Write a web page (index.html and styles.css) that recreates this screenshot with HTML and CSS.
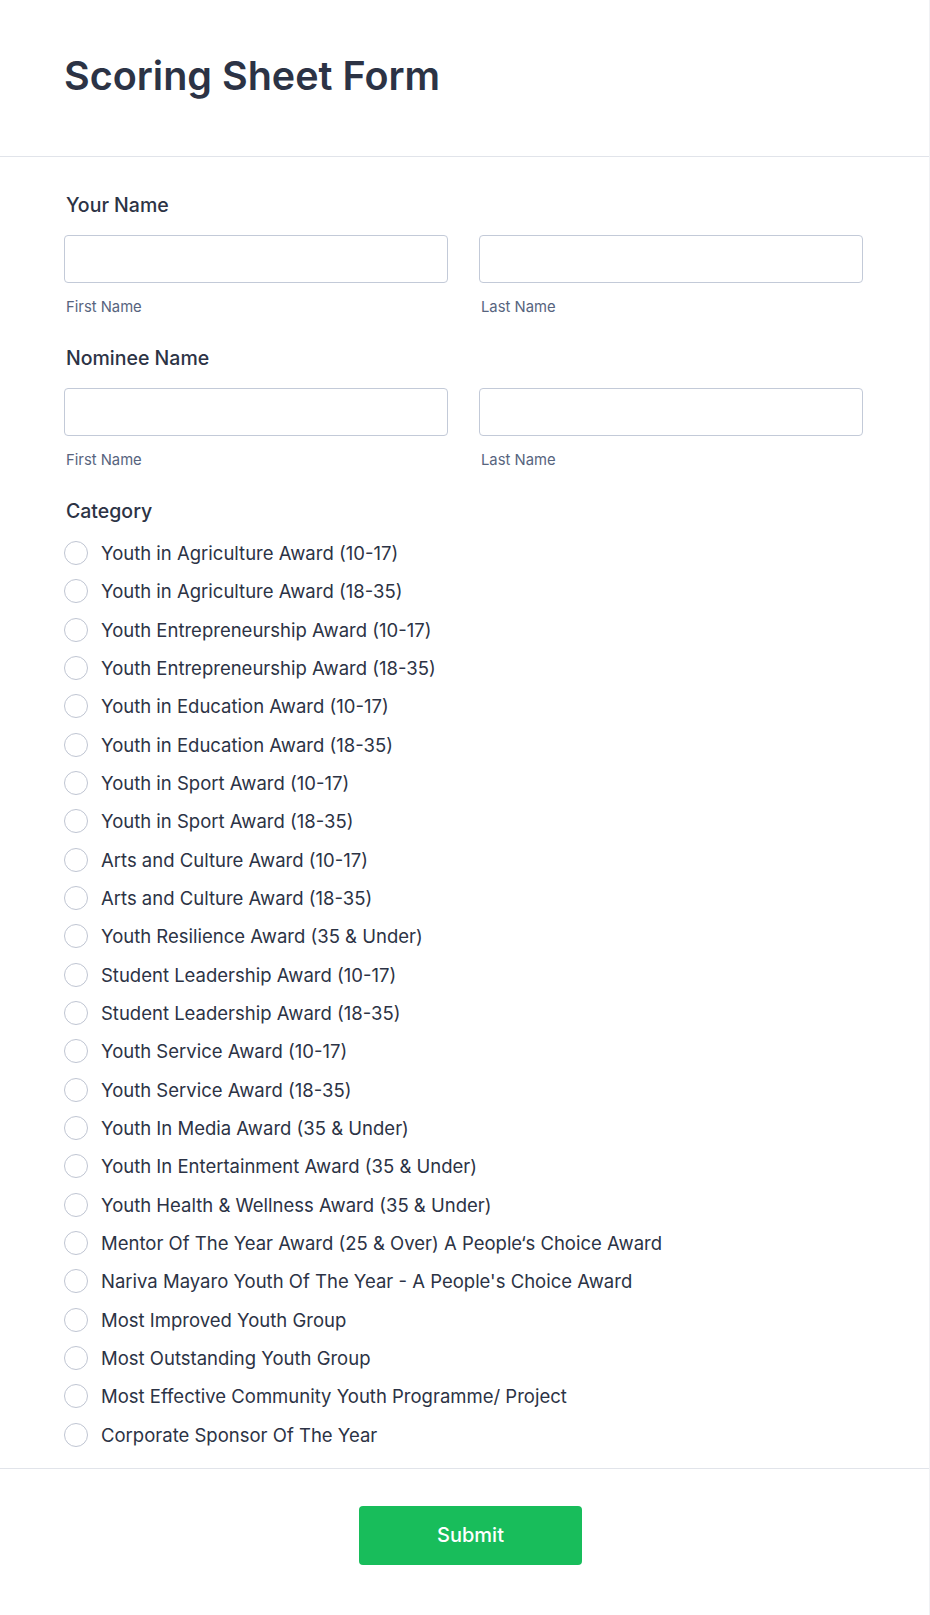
FILE: index.html
```html
<!DOCTYPE html>
<html lang="en">
<head>
<meta charset="utf-8">
<title>Scoring Sheet Form</title>
<link rel="stylesheet" href="styles.css">
</head>
<body>
<div class="page">
  <header class="form-header">
    <h1 class="form-title">Scoring Sheet Form</h1>
  </header>
  <form class="form-body">
    <div class="field">
      <div class="field-label">Your Name</div>
      <div class="name-row">
        <div class="name-col">
          <input class="text-input" type="text">
          <div class="sublabel">First Name</div>
        </div>
        <div class="name-col">
          <input class="text-input" type="text">
          <div class="sublabel">Last Name</div>
        </div>
      </div>
    </div>
    <div class="field">
      <div class="field-label">Nominee Name</div>
      <div class="name-row">
        <div class="name-col">
          <input class="text-input" type="text">
          <div class="sublabel">First Name</div>
        </div>
        <div class="name-col">
          <input class="text-input" type="text">
          <div class="sublabel">Last Name</div>
        </div>
      </div>
    </div>
    <div class="field field-category">
      <div class="field-label">Category</div>
      <div class="options">
        <label class="option"><span class="radio"></span><span class="option-text">Youth in Agriculture Award (10-17)</span></label>
        <label class="option"><span class="radio"></span><span class="option-text">Youth in Agriculture Award (18-35)</span></label>
        <label class="option"><span class="radio"></span><span class="option-text">Youth Entrepreneurship Award (10-17)</span></label>
        <label class="option"><span class="radio"></span><span class="option-text">Youth Entrepreneurship Award (18-35)</span></label>
        <label class="option"><span class="radio"></span><span class="option-text">Youth in Education Award (10-17)</span></label>
        <label class="option"><span class="radio"></span><span class="option-text">Youth in Education Award (18-35)</span></label>
        <label class="option"><span class="radio"></span><span class="option-text">Youth in Sport Award (10-17)</span></label>
        <label class="option"><span class="radio"></span><span class="option-text">Youth in Sport Award (18-35)</span></label>
        <label class="option"><span class="radio"></span><span class="option-text">Arts and Culture Award (10-17)</span></label>
        <label class="option"><span class="radio"></span><span class="option-text">Arts and Culture Award (18-35)</span></label>
        <label class="option"><span class="radio"></span><span class="option-text">Youth Resilience Award (35 &amp; Under)</span></label>
        <label class="option"><span class="radio"></span><span class="option-text">Student Leadership Award (10-17)</span></label>
        <label class="option"><span class="radio"></span><span class="option-text">Student Leadership Award (18-35)</span></label>
        <label class="option"><span class="radio"></span><span class="option-text">Youth Service Award (10-17)</span></label>
        <label class="option"><span class="radio"></span><span class="option-text">Youth Service Award (18-35)</span></label>
        <label class="option"><span class="radio"></span><span class="option-text">Youth In Media Award (35 &amp; Under)</span></label>
        <label class="option"><span class="radio"></span><span class="option-text">Youth In Entertainment Award (35 &amp; Under)</span></label>
        <label class="option"><span class="radio"></span><span class="option-text">Youth Health &amp; Wellness Award (35 &amp; Under)</span></label>
        <label class="option"><span class="radio"></span><span class="option-text">Mentor Of The Year Award (25 &amp; Over) A People‘s Choice Award</span></label>
        <label class="option"><span class="radio"></span><span class="option-text">Nariva Mayaro Youth Of The Year - A People's Choice Award</span></label>
        <label class="option"><span class="radio"></span><span class="option-text">Most Improved Youth Group</span></label>
        <label class="option"><span class="radio"></span><span class="option-text">Most Outstanding Youth Group</span></label>
        <label class="option"><span class="radio"></span><span class="option-text">Most Effective Community Youth Programme/ Project</span></label>
        <label class="option"><span class="radio"></span><span class="option-text">Corporate Sponsor Of The Year</span></label>
      </div>
    </div>
  </form>
  <div class="form-footer">
    <button class="submit-btn" type="button">Submit</button>
  </div>
</div>
</body>
</html>
```

FILE: styles.css
```css
* {
  box-sizing: border-box;
}

html, body {
  margin: 0;
  padding: 0;
  background: #ffffff;
}

body {
  font-family: Inter, "Noto Sans", "Liberation Sans", sans-serif;
  color: #2c3345;
}

.page {
  width: 930px;
  min-height: 1615px;
  border-right: 1px solid #f0f1f4;
}

.form-header {
  padding: 53px 64px 57px 64px;
  border-bottom: 1px solid #e1e4ea;
}

.form-title {
  margin: 0;
  font-size: 39.5px;
  line-height: 46px;
  font-weight: 600;
  color: #2c3345;
}

.form-body {
  padding: 37px 66px 14px 64px;
  border-bottom: 1px solid #e1e4ea;
}

.field {
  margin-bottom: 31px;
}

.field-category {
  margin-bottom: 0;
}

.field-label {
  font-size: 19.5px;
  line-height: 23px;
  font-weight: 500;
  color: #2c3345;
  padding-left: 2px;
}

.name-row {
  display: flex;
  gap: 31px;
  margin-top: 18px;
}

.name-col {
  flex: 1 1 0;
}

.text-input {
  display: block;
  width: 100%;
  height: 48px;
  border: 1px solid #c3cad8;
  border-radius: 4px;
  background: #ffffff;
  margin: 0;
  padding: 0 12px;
  font: inherit;
}

.sublabel {
  margin-top: 16px;
  font-size: 14.8px;
  line-height: 17px;
  color: #57647e;
  padding-left: 2px;
}

.options {
  margin-top: 11px;
  display: flex;
  flex-direction: column;
}

.option {
  display: flex;
  align-items: center;
  height: 38.33px;
}

.radio {
  flex: 0 0 auto;
  width: 24px;
  height: 24px;
  border: 1px solid #bfc5d2;
  border-radius: 50%;
  background: #ffffff;
}

.option-text {
  margin-left: 13px;
  font-size: 18.5px;
  line-height: 24px;
  color: #2c3345;
}

.form-footer {
  display: flex;
  justify-content: center;
  padding: 37px 0 0 12px;
}

.submit-btn {
  width: 223px;
  height: 59px;
  border: none;
  border-radius: 4px;
  background: #18bd5b;
  color: #ffffff;
  font-family: Inter, "Noto Sans", "Liberation Sans", sans-serif;
  font-size: 20px;
  font-weight: 500;
  cursor: pointer;
}
```
